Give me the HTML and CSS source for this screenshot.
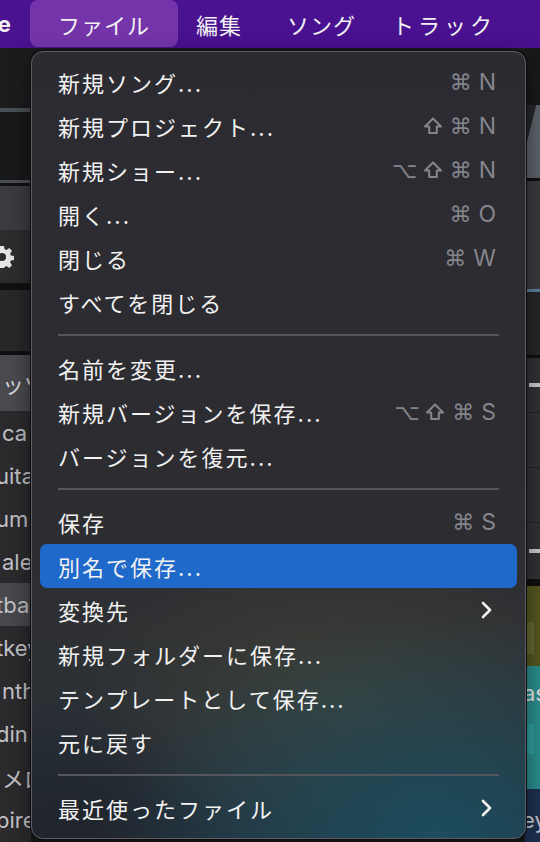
FILE: index.html
```html
<!DOCTYPE html>
<html lang="ja">
<head>
  <meta charset="UTF-8" />
  <meta name="viewport" content="width=device-width, initial-scale=1.0" />
  <title>ファイル メニュー</title>
  <link rel="stylesheet" href="styles.css">
</head>
<body>
  <!-- Menu bar -->
  <header class="menubar">
    <span class="app-name">ne</span>
    <span class="menu-title active">ファイル</span>
    <span class="menu-title edit">編集</span>
    <span class="menu-title song">ソング</span>
    <span class="menu-title tracks">トラック</span>
  </header>

  <!-- App window behind the menu -->
  <div class="workspace">
    <div class="left-strip">
      <div class="ls-block ls-top"></div>
      <div class="ls-line ls-gray"></div>
      <div class="ls-block ls-dark"></div>
      <div class="ls-line ls-gray thin"></div>
      <div class="ls-line ls-black thin"></div>
      <div class="ls-block ls-control"></div>
      <div class="ls-block ls-gear">
        <svg width="24" height="24" viewBox="0 0 24 24" class="gear">
          <path fill="#e6e6e6" d="M10 1h4l.6 3.2 1.9.8 2.7-1.9 2.8 2.8-1.9 2.7.8 1.9 3.1.5v4l-3.1.6-.8 1.9 1.9 2.7-2.8 2.8-2.7-1.9-1.9.8L14 23h-4l-.6-3.1-1.9-.8-2.7 1.9-2.8-2.8 1.9-2.7-.8-1.9L0 14v-4l3.1-.5.8-1.9L2 4.9l2.8-2.8 2.7 1.9 1.9-.8zM12 8a4 4 0 1 0 0 8 4 4 0 0 0 0-8z"/>
        </svg>
      </div>
      <div class="ls-line ls-black wide"></div>
      <div class="ls-block ls-mid"></div>
      <div class="ls-line ls-black"></div>
      <div class="track folder">ッツ</div>
      <div class="track">ca</div>
      <div class="track cut">uita</div>
      <div class="track cut">um</div>
      <div class="track">ale</div>
      <div class="track selected cut">tba</div>
      <div class="track cut">tkey</div>
      <div class="track">nth</div>
      <div class="track cut">din</div>
      <div class="track">メロ</div>
      <div class="track cut">pire</div>
    </div>
    <div class="center"></div>
    <div class="right-strip">
      <div class="rs-block rs-top"></div>
      <div class="rs-block rs-display"><span class="rs-wedge"></span></div>
      <div class="rs-line rs-black"></div>
      <div class="rs-block rs-panel"></div>
      <div class="rs-line rs-blue"></div>
      <div class="rs-block rs-dark"></div>
      <div class="rs-line rs-black"></div>
      <div class="rs-block rs-row"><span class="rs-dash"></span></div>
      <div class="rs-block rs-row"></div>
      <div class="rs-block rs-row"></div>
      <div class="rs-block rs-row last"><span class="rs-dash"></span></div>
      <div class="rs-line rs-black wide"></div>
      <div class="rs-block rs-olive"><span class="rs-knob"></span></div>
      <div class="rs-block rs-teal">as<span class="rs-knob teal"></span></div>
      <div class="rs-block rs-navy">ey</div>
    </div>
  </div>

  <!-- Open "File" menu -->
  <div class="file-menu">
    <div class="menu-item"><span>新規ソング...</span><span class="keys"><span class="sym">⌘</span><span class="key">N</span></span></div>
    <div class="menu-item"><span>新規プロジェクト...</span><span class="keys"><span class="sym"><svg class="shift" width="20" height="20" viewBox="0 0 20 20"><path d="M10 2.5 18 10.5h-4.2v6.5H6.2v-6.5H2z" fill="none" stroke="#85858c" stroke-width="2" stroke-linejoin="round"/></svg></span><span class="sym">⌘</span><span class="key">N</span></span></div>
    <div class="menu-item"><span>新規ショー...</span><span class="keys"><span class="sym">⌥</span><span class="sym"><svg class="shift" width="20" height="20" viewBox="0 0 20 20"><path d="M10 2.5 18 10.5h-4.2v6.5H6.2v-6.5H2z" fill="none" stroke="#85858c" stroke-width="2" stroke-linejoin="round"/></svg></span><span class="sym">⌘</span><span class="key">N</span></span></div>
    <div class="menu-item"><span>開く...</span><span class="keys"><span class="sym">⌘</span><span class="key">O</span></span></div>
    <div class="menu-item"><span>閉じる</span><span class="keys"><span class="sym">⌘</span><span class="key">W</span></span></div>
    <div class="menu-item"><span>すべてを閉じる</span></div>
    <div class="separator"></div>
    <div class="menu-item"><span>名前を変更...</span></div>
    <div class="menu-item"><span>新規バージョンを保存...</span><span class="keys"><span class="sym">⌥</span><span class="sym"><svg class="shift" width="20" height="20" viewBox="0 0 20 20"><path d="M10 2.5 18 10.5h-4.2v6.5H6.2v-6.5H2z" fill="none" stroke="#85858c" stroke-width="2" stroke-linejoin="round"/></svg></span><span class="sym">⌘</span><span class="key">S</span></span></div>
    <div class="menu-item"><span>バージョンを復元...</span></div>
    <div class="separator"></div>
    <div class="menu-item"><span>保存</span><span class="keys"><span class="sym">⌘</span><span class="key">S</span></span></div>
    <div class="menu-item highlighted"><span>別名で保存...</span></div>
    <div class="menu-item"><span>変換先</span>
      <svg class="chevron" width="12" height="18" viewBox="0 0 12 18"><polyline points="2,2 9,9 2,16" fill="none" stroke="#f2f2f2" stroke-width="2.6" stroke-linecap="round" stroke-linejoin="round"/></svg>
    </div>
    <div class="menu-item"><span>新規フォルダーに保存...</span></div>
    <div class="menu-item"><span>テンプレートとして保存...</span></div>
    <div class="menu-item"><span>元に戻す</span></div>
    <div class="separator"></div>
    <div class="menu-item"><span>最近使ったファイル</span>
      <svg class="chevron" width="12" height="18" viewBox="0 0 12 18"><polyline points="2,2 9,9 2,16" fill="none" stroke="#f2f2f2" stroke-width="2.6" stroke-linecap="round" stroke-linejoin="round"/></svg>
    </div>
  </div>
</body>
</html>
```

FILE: styles.css
```css
/* Reset and base */
* {
  margin: 0;
  padding: 0;
  box-sizing: border-box;
}

body {
  width: 540px;
  height: 842px;
  overflow: hidden;
  position: relative;
  background-color: #1c1c1e;
  font-family: "Inter", "Noto Sans CJK JP", sans-serif;
  color: #f2f2f2;
}

/* Menu bar */
.menubar {
  height: 48px;
  display: flex;
  align-items: center;
  background-color: #4a1190;
  font-size: 22px;
  letter-spacing: 1px;
  white-space: nowrap;
  overflow: hidden;
}

.app-name {
  font-weight: 700;
  margin-left: -17px;
  width: 47px;
  flex-shrink: 0;
}

.menu-title {
  height: 47px;
  display: flex;
  align-items: center;
  align-self: flex-start;
  flex-shrink: 0;
}

.menu-title.active {
  width: 148px;
  padding-left: 28px;
  background-color: #7435aa;
  border-radius: 8px;
}

.menu-title.edit {
  margin-left: 18px;
}

.menu-title.song {
  margin-left: 45px;
}

.menu-title.tracks {
  margin-left: 36px;
  letter-spacing: 4px;
}

/* Workspace behind the menu */
.workspace {
  display: flex;
  height: 794px;
}

.left-strip {
  width: 31px;
  display: flex;
  flex-direction: column;
  overflow: hidden;
  background-color: #2a2a2d;
}

.ls-block, .ls-line { flex-shrink: 0; }
.ls-top { height: 60px; background-color: #1c1c1e; }
.ls-dark { height: 68px; background-color: #19191b; }
.ls-control { height: 44px; background-color: #3c3c40; }
.ls-gear {
  height: 53px;
  background-color: #2d2d30;
  display: flex;
  align-items: center;
}
.ls-mid { height: 61px; background-color: #28282b; }

.ls-line { height: 4px; }
.ls-line.thin { height: 3px; }
.ls-line.wide { height: 7px; }
.ls-gray { background-color: #4b5056; }
.ls-black { background-color: #111113; }

.gear {
  margin-left: -10px;
}

.track {
  height: 43px;
  flex-shrink: 0;
  display: flex;
  align-items: center;
  padding-left: 2px;
  font-size: 22px;
  color: #c4c4c8;
  white-space: nowrap;
  background-color: #2b2b2e;
}

.track.cut {
  margin-left: -6px;
}

.track.folder {
  height: 56px;
  background-color: #4a4a4f;
  color: #d8d8dc;
}

.track.selected {
  background-color: #48484d;
}

.center {
  flex: 1;
  background-color: #1b1b1d;
}

.right-strip {
  width: 15px;
  display: flex;
  flex-direction: column;
  overflow: hidden;
  background-color: #2c2c2f;
}

.rs-block { flex-shrink: 0; }
.rs-top { height: 57px; background-color: #19191b; }
.rs-display {
  height: 73px;
  background-color: #5d636b;
  position: relative;
  overflow: hidden;
}
.rs-wedge {
  position: absolute;
  left: -10px;
  top: -6px;
  width: 14px;
  height: 70px;
  background-color: #25272b;
  transform: skewX(-14deg);
  border-radius: 0 0 4px 0;
}
.rs-line { height: 3px; flex-shrink: 0; }
.rs-line.wide { height: 7px; }
.rs-black { background-color: #0f0f11; }
.rs-blue { background-color: #58809e; }
.rs-panel { height: 108px; background-color: #3b3b3f; }
.rs-dark { height: 63px; background-color: #262629; }
.rs-row {
  height: 55px;
  background-color: #323236;
  border-bottom: 1px solid #222225;
  display: flex;
  align-items: center;
}
.rs-row.last {
  height: 56px;
  border-bottom: none;
}
.rs-dash {
  width: 12px;
  height: 4px;
  margin-left: 4px;
  background-color: #c9c9cc;
}
.rs-olive {
  height: 80px;
  background-color: #55561f;
  display: flex;
  align-items: flex-end;
  padding-bottom: 12px;
}
.rs-knob {
  display: block;
  width: 9px;
  height: 32px;
  background-color: #66672f;
}
.rs-knob.teal {
  margin-top: 18px;
  margin-left: 2px;
  height: 30px;
  background-color: #2f9e9e;
}
.rs-teal {
  height: 123px;
  background-color: #2a8d8d;
  font-size: 22px;
  color: #e8e8e8;
  padding-top: 14px;
  margin-left: -2px;
}
.rs-navy {
  height: 60px;
  background-color: #1e3151;
  font-size: 22px;
  color: #c8c8cc;
  padding-top: 18px;
  margin-left: -3px;
}

/* File menu overlay */
.file-menu {
  position: absolute;
  top: 51px;
  left: 31px;
  width: 495px;
  height: 788px;
  padding: 8px 8px 0;
  border: 1px solid #5e5e64;
  border-radius: 12px;
  box-shadow: 0 0 0 1px #0c0c0e, 0 8px 24px rgba(0, 0, 0, 0.5);
  background:
    radial-gradient(ellipse 320px 220px at 82% 100%, rgba(27, 78, 96, 0.95), rgba(27, 78, 96, 0) 100%),
    radial-gradient(ellipse 260px 160px at 62% 82%, rgba(68, 70, 58, 0.7), rgba(68, 70, 58, 0) 100%),
    radial-gradient(ellipse 200px 140px at 5% 100%, rgba(30, 32, 40, 0.8), rgba(30, 32, 40, 0) 100%),
    linear-gradient(180deg, #2b2b31 0%, #2c2c31 58%, #2e3033 74%, #25303a 100%);
}

.menu-item {
  height: 44px;
  display: flex;
  justify-content: space-between;
  align-items: center;
  padding: 0 21px 0 18px;
  border-radius: 7px;
  font-size: 22px;
  letter-spacing: 2px;
  white-space: nowrap;
}

.menu-item.highlighted {
  background-color: #1f69cb;
}

.keys {
  display: flex;
  align-items: center;
  color: #85858c;
  letter-spacing: 0;
}

.sym {
  font-family: "DejaVu Sans", sans-serif;
  font-size: 22px;
  width: 28px;
  display: flex;
  justify-content: center;
}

.shift {
  display: block;
}

.key {
  font-size: 23px;
  margin-left: 4px;
}

.chevron {
  margin-right: 3px;
}

.separator {
  height: 22px;
  margin: 0 18px;
  display: flex;
  align-items: center;
}

.separator::before {
  content: "";
  flex: 1;
  height: 2px;
  background-color: #55555c;
}
```
